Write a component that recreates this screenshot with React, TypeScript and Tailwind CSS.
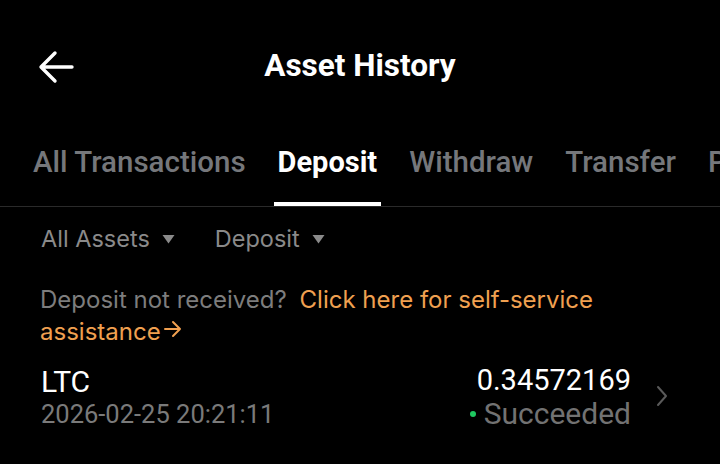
import React, { useState } from "react";

const tabs = ["All Transactions", "Deposit", "Withdraw", "Transfer", "P2P"];

const Caret = () => (
  <svg width="13" height="10" viewBox="0 0 13 10" className="ml-[12px]">
    <path d="M0.5 1h12L6.5 9.5z" fill="#8a8a8a" />
  </svg>
);

const App: React.FC = () => {
  const [active, setActive] = useState("Deposit");

  return (
    <div className="w-[720px] h-[464px] bg-black text-white overflow-hidden font-['Roboto',sans-serif]">
      {/* header */}
      <div className="relative flex items-center justify-center h-[134px]">
        <button className="absolute left-[38px] top-[50px]">
          <svg width="36" height="34" viewBox="0 0 36 34" fill="none">
            <path d="M34 17H4M17 3L3 17l14 14" stroke="white" strokeWidth="3.4" strokeLinecap="round" strokeLinejoin="round" />
          </svg>
        </button>
        <h1 className="text-[31.5px] font-bold -mt-[2px]">Asset History</h1>
      </div>

      {/* tabs */}
      <div className="flex items-start gap-[32px] pl-[33px] border-b border-[#2a2a2a] whitespace-nowrap h-[73px]">
        {tabs.map((t) => (
          <div
            key={t}
            onClick={() => setActive(t)}
            className={`relative cursor-pointer leading-[56px] h-[72px] ${
              active === t ? "text-[29px] text-white font-bold" : "text-[29.5px] text-[#75777b] font-medium"
            }`}
          >
            {t}
            {active === t && (
              <span className="absolute left-[-4px] right-[-4px] bottom-0 h-[4px] bg-white" />
            )}
          </div>
        ))}
      </div>

      {/* filters */}
      <div className="flex items-center gap-[40px] pl-[41px] pt-[16px] font-['Inter',sans-serif] text-[23.5px] leading-[32px] text-[#8a8a8a]">
        <div className="flex items-center">
          All Assets
          <Caret />
        </div>
        <div className="flex items-center">
          Deposit
          <Caret />
        </div>
      </div>

      {/* notice */}
      <p className="pl-[40px] pr-[40px] pt-[29px] font-['Inter',sans-serif] text-[24px] leading-[32px] text-[#7d7d7d]">
        Deposit not received?{" "}
        <span className="ml-[6px] text-[#f0a050]">
          Click here for self-service{" "}
          <span className="whitespace-nowrap">
            assistance
            <svg width="20" height="18" viewBox="0 0 20 18" fill="none" className="inline ml-[2px] -mt-[8px]">
              <path d="M2 9h15M10 2l7 7-7 7" stroke="#f0a050" strokeWidth="2" strokeLinecap="round" strokeLinejoin="round" />
            </svg>
          </span>
        </span>
      </p>

      {/* record */}
      <div className="flex items-center pl-[41px] pr-[52px] pt-[15px]">
        <div className="flex-1">
          <div className="text-[30px] leading-[34px] text-white">LTC</div>
          <div className="text-[25.5px] leading-[30px] text-[#7a7a7a]">2026-02-25 20:21:11</div>
        </div>
        <div className="text-right">
          <div className="text-[29px] leading-[34px] text-white">0.34572169</div>
          <div className="flex items-center justify-end text-[30px] leading-[34px] text-[#727272]">
            <span className="w-[6px] h-[6px] rounded-full bg-[#1ec860] mr-[8px]" />
            Succeeded
          </div>
        </div>
        <svg width="12" height="22" viewBox="0 0 12 22" fill="none" className="ml-[25px] -mt-[2px]">
          <path d="M2 2l8 9-8 9" stroke="#5a5a5a" strokeWidth="2" strokeLinecap="round" strokeLinejoin="round" />
        </svg>
      </div>
    </div>
  );
};

export default App;
